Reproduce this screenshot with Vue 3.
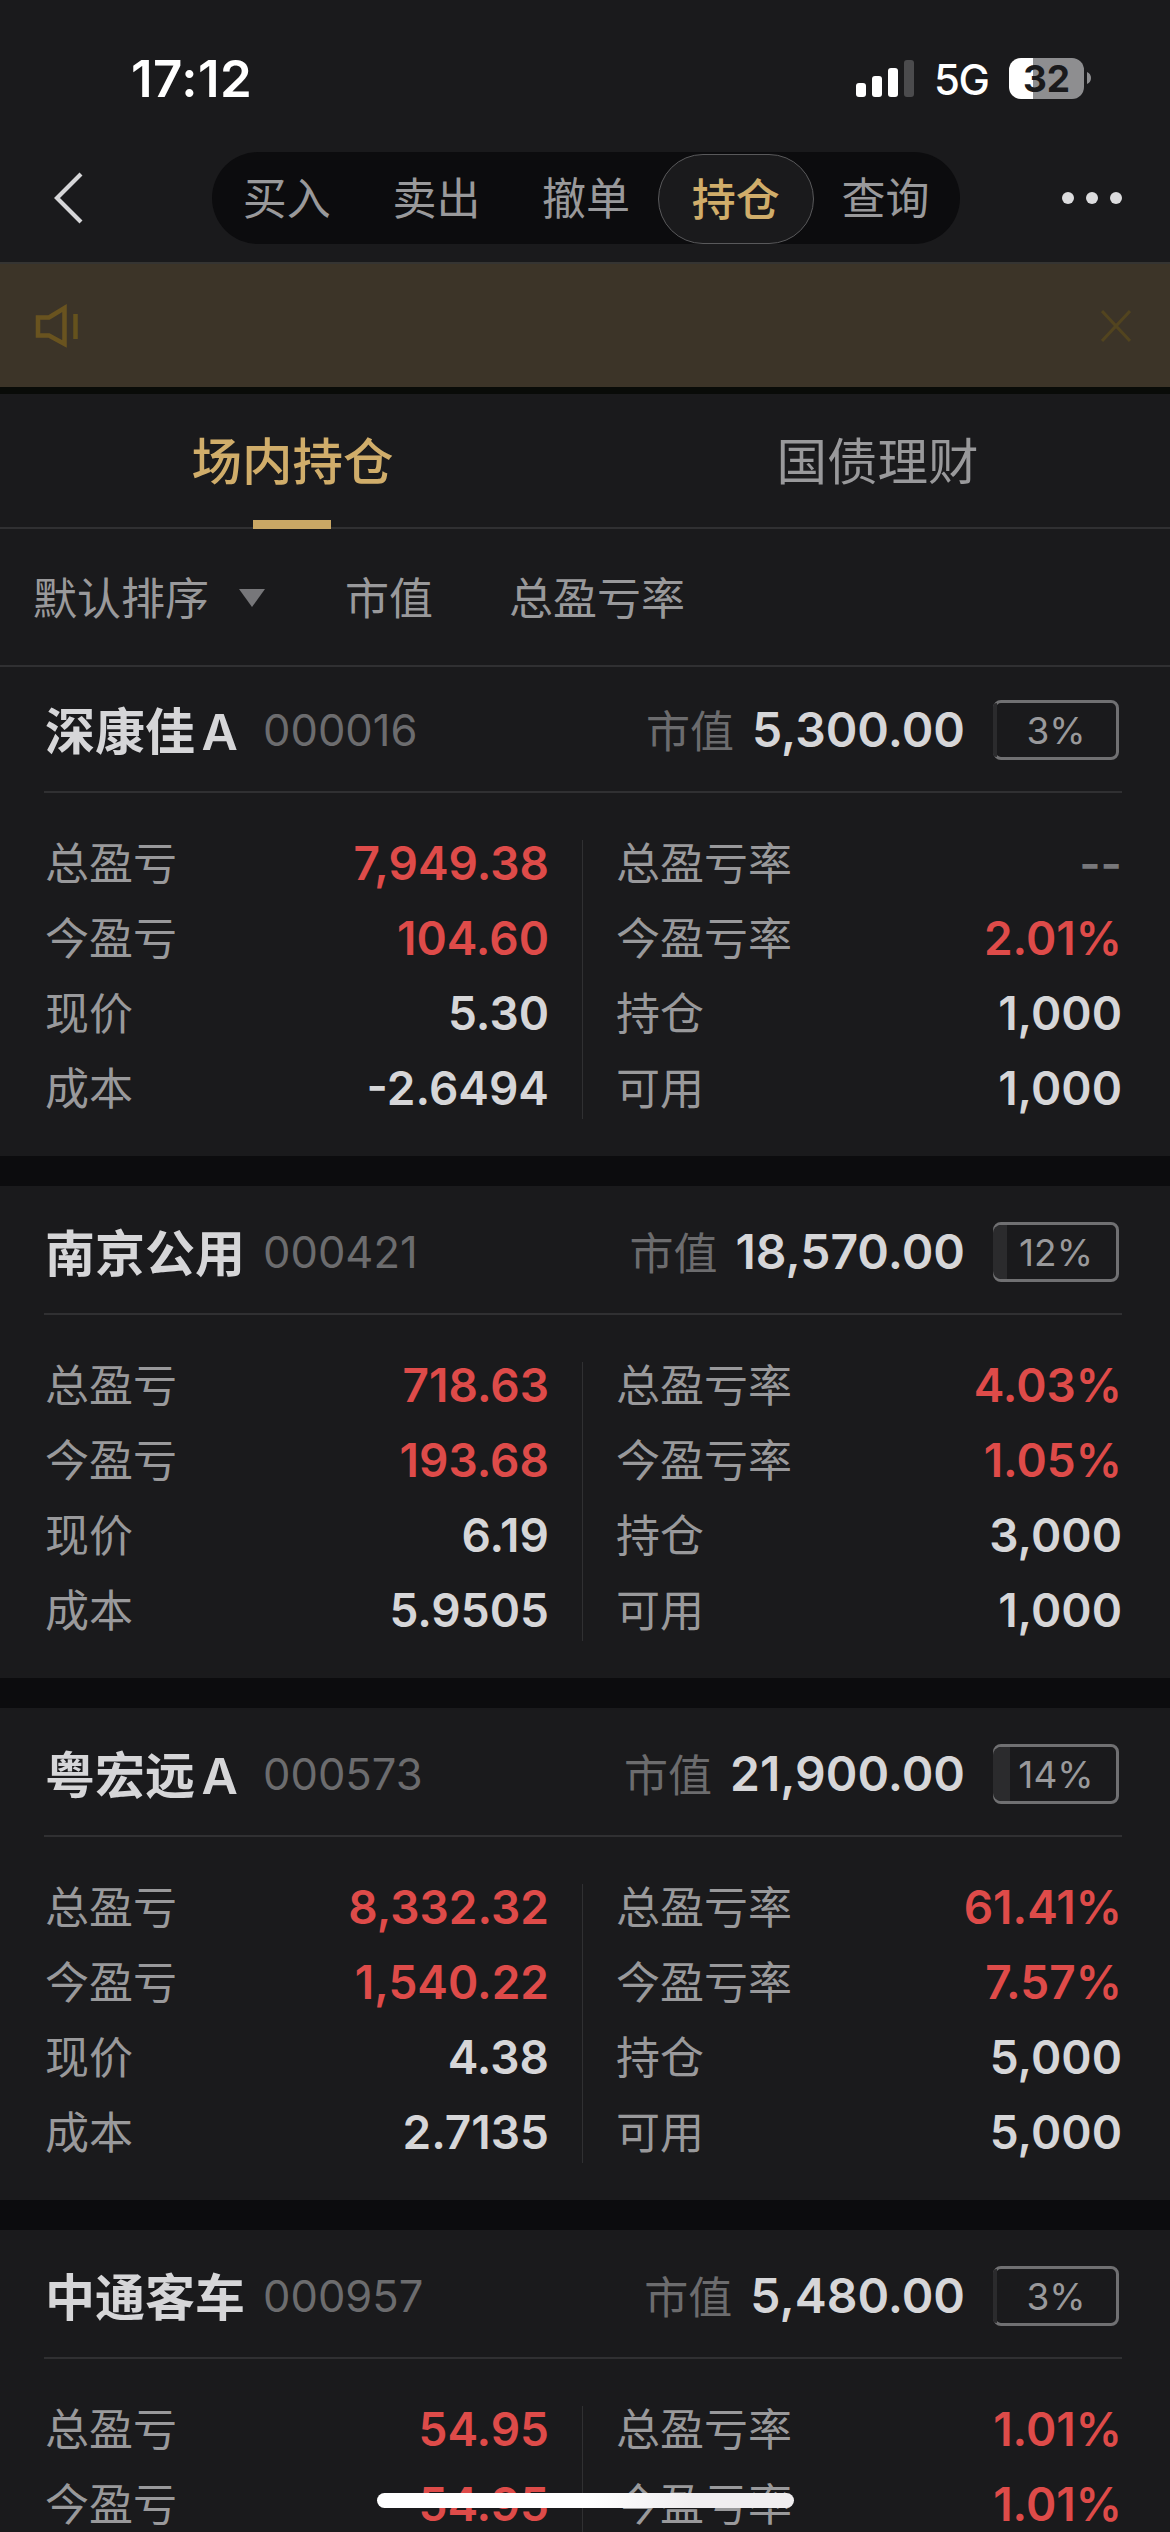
<template>
  <div class="screen">
    <div class="status-bar">
      <span class="clock">17:12</span>
      <svg class="signal" width="58" height="37" viewBox="0 0 58 37">
        <rect x="0" y="23" width="10" height="14" rx="3" fill="#fff" />
        <rect x="16" y="16" width="10" height="21" rx="3" fill="#fff" />
        <rect x="32" y="8" width="10" height="29" rx="3" fill="#fff" />
        <rect x="48" y="0" width="10" height="37" rx="3" fill="#4b4b4d" />
      </svg>
      <span class="network">5G</span>
      <div class="battery">{{ battery }}</div>
      <svg class="battery-cap" width="4" height="12" viewBox="0 0 4 12">
        <path d="M0 0C2.5 1 4 3 4 6S2.5 11 0 12Z" fill="#8e8e90" />
      </svg>
    </div>

    <div class="nav-bar">
      <svg class="back" width="30" height="54" viewBox="0 0 30 54">
        <path d="M28 3L4 27L28 51" fill="none" stroke="#d6d6d8" stroke-width="4.2" />
      </svg>
      <div class="nav-tabs">
        <button
          v-for="item in navItems"
          :key="item"
          class="nav-tab"
          :class="{ active: item === activeNav }"
          type="button"
          @click="activeNav = item"
        >{{ item }}</button>
      </div>
      <div class="more"><i></i><i></i><i></i></div>
    </div>

    <div class="notice">
      <svg width="44" height="44" viewBox="0 0 44 44">
        <path d="M3 13.500H14L29.500 4V40L14 31.500H3Z" fill="none" stroke="#69531f" stroke-width="4.500" />
        <path d="M40.500 10V35" stroke="#65521d" stroke-width="4.500" />
      </svg>
      <svg width="30" height="32" viewBox="0 0 30 32">
        <path d="M1 1L29 31M29 1L1 31" stroke="#52441f" stroke-width="3" />
      </svg>
    </div>

    <div class="tabs">
      <div
        v-for="tab in tabs"
        :key="tab"
        class="tab"
        :class="{ active: tab === activeTab }"
        @click="activeTab = tab"
      >{{ tab }}</div>
    </div>

    <div class="sort-bar">
      <span>默认排序</span>
      <svg class="caret" width="26" height="18" viewBox="0 0 26 18">
        <path d="M0 0H26L13 18Z" fill="#77777a" />
      </svg>
      <span class="sort-value">市值</span>
      <span>总盈亏率</span>
    </div>

    <div class="list">
      <div v-for="stock in stocks" :key="stock.code" class="card">
        <div class="card-head">
          <span class="name">{{ stock.name }}</span>
          <span class="code">{{ stock.code }}</span>
          <span class="mv-label">市值</span>
          <span class="mv">{{ stock.value }}</span>
          <div class="ratio">
            <div class="ratio-fill" :style="{ width: stock.ratio * 1.2 + 'px' }"></div>
            <span>{{ stock.ratio }}%</span>
          </div>
        </div>
        <div class="card-body">
          <div v-for="(col, i) in columns" :key="i" class="col">
            <div v-for="field in loadedFields(col, stock)" :key="field.key" class="row">
              <span class="label">{{ field.label }}</span>
              <span class="num" :class="numClass(field, stock)">{{ stock[field.key] }}</span>
            </div>
          </div>
        </div>
      </div>
    </div>

    <div class="home-indicator"></div>
  </div>
</template>

<script setup>
import { ref } from 'vue'

const battery = 32
const navItems = ['买入', '卖出', '撤单', '持仓', '查询']
const activeNav = ref('持仓')
const tabs = ['场内持仓', '国债理财']
const activeTab = ref('场内持仓')

const columns = [
  [
    { key: 'total', label: '总盈亏', profit: true },
    { key: 'today', label: '今盈亏', profit: true },
    { key: 'price', label: '现价' },
    { key: 'cost', label: '成本' }
  ],
  [
    { key: 'totalRate', label: '总盈亏率', profit: true },
    { key: 'todayRate', label: '今盈亏率', profit: true },
    { key: 'held', label: '持仓' },
    { key: 'usable', label: '可用' }
  ]
]

const stocks = [
  {
    name: '深康佳 A', code: '000016', value: '5,300.00', ratio: 3,
    total: '7,949.38', today: '104.60', price: '5.30', cost: '-2.6494',
    totalRate: '--', todayRate: '2.01%', held: '1,000', usable: '1,000'
  },
  {
    name: '南京公用', code: '000421', value: '18,570.00', ratio: 12,
    total: '718.63', today: '193.68', price: '6.19', cost: '5.9505',
    totalRate: '4.03%', todayRate: '1.05%', held: '3,000', usable: '1,000'
  },
  {
    name: '粤宏远 A', code: '000573', value: '21,900.00', ratio: 14,
    total: '8,332.32', today: '1,540.22', price: '4.38', cost: '2.7135',
    totalRate: '61.41%', todayRate: '7.57%', held: '5,000', usable: '5,000'
  },
  {
    name: '中通客车', code: '000957', value: '5,480.00', ratio: 3,
    total: '54.95', today: '54.95', totalRate: '1.01%', todayRate: '1.01%'
  }
]

function loadedFields(col, stock) {
  return col.filter(field => stock[field.key] !== undefined)
}

function numClass(field, stock) {
  if (stock[field.key] === '--') return 'empty'
  return field.profit ? 'up' : ''
}
</script>

<style>
body {
  margin: 0;
  background: #1a1a1c;
}
</style>

<style scoped>
.screen {
  position: relative;
  display: flex;
  flex-direction: column;
  width: 1170px;
  height: 2532px;
  overflow: hidden;
  background: #1a1a1c;
  color: #d6d6d8;
  font-family: Inter, "Noto Sans CJK SC", sans-serif;
  font-size: 44px;
  white-space: nowrap;
}

.screen * {
  box-sizing: border-box;
  flex-shrink: 0;
}

.status-bar {
  display: flex;
  align-items: center;
  height: 152px;
  padding: 4px 79px 0 131px;
  color: #fff;
}

.clock {
  flex: 1;
  font-size: 51px;
  font-weight: 600;
  letter-spacing: 0.5px;
}

.network {
  width: 53px;
  margin: 2px 22px 0 20px;
  font-size: 42px;
  font-weight: 500;
  letter-spacing: -1.5px;
}

.battery {
  display: flex;
  align-items: center;
  justify-content: center;
  width: 75px;
  height: 41px;
  border-radius: 12px;
  background: linear-gradient(to right, #fff 32%, #8e8e90 32%);
  color: #1a1a1c;
  font-size: 37px;
  font-weight: 700;
}

.battery-cap {
  margin-left: 3px;
}

.nav-bar {
  display: flex;
  align-items: center;
  height: 110px;
  padding: 0 48px 18px 53px;
}

.nav-tabs {
  display: flex;
  align-items: center;
  height: 92px;
  margin: 0 auto 0 129px;
  border-radius: 46px;
  background: #0c0c0e;
}

.nav-tab {
  width: 149.600px;
  height: 90px;
  padding: 0 0 4px;
  border: none;
  background: none;
  color: #99999b;
  font: inherit;
}

.nav-tab.active {
  width: 156px;
  margin: 2px -3px 0;
  border: 1px solid #59595b;
  border-radius: 45px;
  background: #1a1a1c;
  color: #d0ad6a;
  font-weight: 500;
}

.more {
  display: flex;
  gap: 12px;
}

.more i {
  width: 12px;
  height: 12px;
  border-radius: 50%;
  background: #dcdcde;
}

.notice {
  display: flex;
  align-items: center;
  justify-content: space-between;
  height: 132px;
  padding: 0 39px 0 35px;
  border-top: 2px solid #353432;
  border-bottom: 7px solid #090b08;
  background: #3c3428;
}

.tabs {
  display: flex;
  height: 135px;
  border-bottom: 2px solid #303032;
}

.tab {
  position: relative;
  display: flex;
  align-items: center;
  justify-content: center;
  width: 50%;
  padding-bottom: 5px;
  color: #99999b;
  font-size: 50.5px;
}

.tab.active {
  color: #d0ad6a;
  font-weight: 500;
}

.tab.active::after {
  content: '';
  position: absolute;
  bottom: -2px;
  left: 253px;
  width: 78px;
  height: 9px;
  background: #c9a765;
}

.sort-bar {
  display: flex;
  align-items: center;
  height: 138px;
  padding: 0 0 2px 33px;
  border-bottom: 2px solid #303032;
  color: #99999b;
}

.caret {
  margin: 4px 80px 0 30px;
}

.sort-value {
  margin-right: 76px;
}

.list {
  margin-top: -3px;
}

.card {
  height: 522px;
  border-bottom: 30px solid #0c0c0e;
}

.card-head {
  display: flex;
  align-items: center;
  height: 129px;
  margin: 0 48px 0 44px;
  padding-top: 5px;
  border-bottom: 2px solid #303032;
}

.name {
  min-width: 219px;
  padding: 0 0 5px 1px;
  font-size: 50px;
  font-weight: 600;
  word-spacing: -6px;
}

.code {
  flex: 1;
  color: #6c6c6e;
  font-size: 43.5px;
}

.mv-label {
  margin-right: 18px;
  padding-bottom: 3px;
  color: #6c6c6e;
}

.mv {
  margin: 0 28px 2px 0;
  font-size: 48px;
  font-weight: 600;
}

.ratio {
  position: relative;
  z-index: 0;
  display: flex;
  align-items: center;
  justify-content: center;
  width: 126px;
  height: 60px;
  margin-right: 3px;
  border: 3px solid #707072;
  border-radius: 8px;
  color: #99999b;
  font-size: 37px;
}

.ratio-fill {
  position: absolute;
  top: 0;
  bottom: 0;
  left: -3px;
  z-index: -1;
  border-radius: 8px 0 0 8px;
  background: #2b2b2d;
}

.card-body {
  display: flex;
  padding: 32px 48px 0 45px;
}

.col {
  position: relative;
  width: 504px;
}

.col:last-child {
  flex: 1;
  height: 301px;
  margin-left: 67px;
}

.col:last-child::before {
  content: '';
  position: absolute;
  top: 15px;
  left: -34px;
  width: 1px;
  height: 279px;
  background: #303032;
}

.row {
  display: flex;
  align-items: center;
  justify-content: space-between;
  height: 75px;
}

.label {
  padding-bottom: 3px;
  color: #99999b;
}

.num {
  font-size: 46px;
  font-weight: 600;
}

.num.up {
  color: #de4b49;
}

.num.empty {
  color: #77777a;
}

.home-indicator {
  position: absolute;
  bottom: 24px;
  left: 377px;
  width: 417px;
  height: 15px;
  border-radius: 8px;
  background: linear-gradient(to right, #fff 50%, #f0eef0 75%);
}
</style>
